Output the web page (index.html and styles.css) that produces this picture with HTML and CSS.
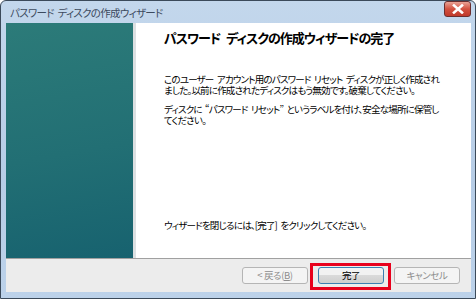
FILE: index.html
```html
<!DOCTYPE html>
<html lang="ja">
<head>
    <meta charset="UTF-8">
    <title>パスワード ディスクの作成ウィザード</title>
    <link rel="stylesheet" href="styles.css">
</head>
<body>

<div class="window">
    <div class="titlebar">
        <span class="title">パスワード ディスクの作成ウィザード</span>
        <div class="close">
            <svg width="14" height="10" viewBox="0 0 14 10">
                <path d="M3 1.5 L11 8.5 M11 1.5 L3 8.5" stroke="#fff" stroke-width="2.6" stroke-linecap="square"/>
            </svg>
        </div>
    </div>

    <div class="client">
        <div class="main">
            <div class="side"></div>
            <div class="stripe"></div>
            <div class="content">
                <h1>パスワード ディスクの作成ウィザードの完了</h1>
                <p class="first">このユーザー アカウント用のパスワード リセット ディスクが正しく作成されました。以前に作成されたディスクはもう無効です。破棄してください。</p>
                <p>ディスクに “パスワード リセット” というラベルを付け、安全な場所に保管してください。</p>
                <p class="close-hint">ウィザードを閉じるには、[完了] をクリックしてください。</p>
            </div>
        </div>
        <div class="footer">
            <button disabled>&lt; 戻る(<u>B</u>)</button>
            <button class="finish">完了</button>
            <button disabled>キャンセル</button>
        </div>
    </div>
</div>

</body>
</html>
```

FILE: styles.css
```css
body {
    margin: 0;
    font-family: "Noto Sans CJK JP", sans-serif;
    font-feature-settings: "palt";
}
.window {
    width: 476px;
    height: 299px;
    box-sizing: border-box;
    border: 1px solid #3b4a5a;
    border-radius: 6px 6px 0 0;
    background: linear-gradient(#c3d7ec, #b7cde6 60%, #bcd2ea);
    display: flex;
    flex-direction: column;
    padding: 0 4px 6px 5px;
}
.titlebar {
    height: 22px;
    display: flex;
    align-items: center;
    justify-content: space-between;
}
.title {
    padding-left: 4px;
    font-size: 10.5px;
    color: #3c4a5e;
    letter-spacing: -0.7px;
    word-spacing: 2px;
}
.close {
    width: 25px;
    height: 14px;
    margin-top: -6px;
    border: 1px solid #6b2f2f;
    border-radius: 3px;
    background: linear-gradient(#e9a396, #d2513f 50%, #c0392b);
    display: flex;
    align-items: center;
    justify-content: center;
}
.client {
    flex: 1;
    display: flex;
    flex-direction: column;
    background: #fff;
}
.main {
    flex: 1;
    display: flex;
    border-bottom: 1px solid #a0a0a0;
}
.side {
    width: 127px;
    background: linear-gradient(170deg, #2c7b79, #226f74 55%, #17626f);
}
.stripe {
    width: 3px;
    background: #dce0e2;
}
.content {
    flex: 1;
    padding: 3px 10px 0 28px;
    font-size: 9.5px;
    color: #000;
    display: flex;
    flex-direction: column;
}
h1 {
    margin: 0;
    font-size: 13px;
    font-weight: bold;
    line-height: 24px;
    letter-spacing: -1px;
    word-spacing: 4px;
}
.content p {
    width: 281px;
    margin: 0 0 8px;
    line-height: 11px;
    letter-spacing: -0.8px;
    word-spacing: 2px;
}
.content p.first {
    margin-top: 24px;
}
.content p.close-hint {
    margin-top: auto;
    margin-bottom: 27px;
}
.footer {
    height: 33px;
    background: #ececec;
    display: flex;
    justify-content: flex-end;
    align-items: center;
    gap: 10px;
    padding-right: 11px;
}
button {
    width: 66px;
    height: 17px;
    padding: 0;
    font-family: "Noto Sans CJK JP", sans-serif;
    font-feature-settings: "palt";
    font-size: 9.5px;
    letter-spacing: -0.4px;
    line-height: 15px;
    border: 1px solid #b5b5b5;
    border-radius: 3px;
    background: #f4f4f4;
    color: #000;
}
button:disabled {
    color: #8d8d8d;
}
.finish {
    position: relative;
    border-color: #3c7fb1;
    background: linear-gradient(#f2f2f2 50%, #dadada 50%, #cfcfcf);
}
/* красная рамка вокруг кнопки */
.finish::after {
    content: "";
    position: absolute;
    left: -9px;
    right: -8px;
    top: -5px;
    bottom: -7px;
    border: 3px solid #e8001c;
}
```
